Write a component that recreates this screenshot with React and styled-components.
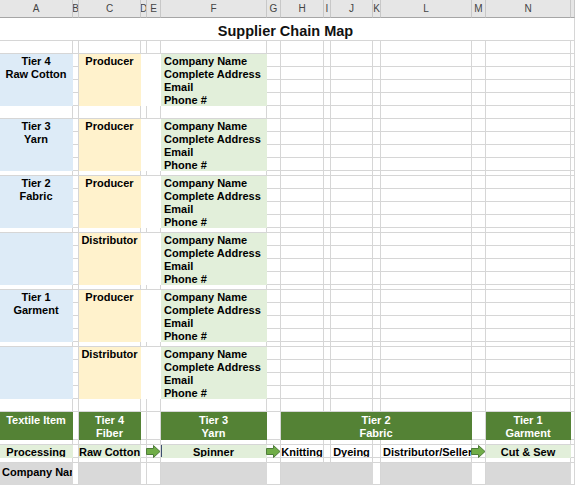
import React from 'react';
import styled, { createGlobalStyle } from 'styled-components';

const GRID = '#d6d6d6';

const fills = {
  blue: '#ddebf7',
  yellow: '#fff2cc',
  mint: '#e2efda',
  green: '#548235',
  gray: '#d9d9d9',
  white: '#ffffff',
};

const letters = ['A', 'B', 'C', 'D', 'E', 'F', 'G', 'H', 'I', 'J', 'K', 'L', 'M', 'N', ''];
const colWidths = '73px 6px 62px 6px 14px 106px 14px 43px 7px 42px 8px 91px 14px 85px 1fr';

const block = [13, 13, 13, 13];
const rowHeights = [
  18, 23, 13,
  ...block, 13,
  ...block, 5,
  ...block, 5,
  ...block, 5,
  ...block, 5,
  ...block, 13,
  28, 5, 13, 5, 22,
];

const GlobalStyle = createGlobalStyle`
  html, body {
    margin: 0;
    padding: 0;
    background: #fff;
    overflow: hidden;
  }
`;

const Sheet = styled.div`
  display: grid;
  grid-template-columns: ${colWidths};
  grid-template-rows: ${rowHeights.map((h) => h + 'px').join(' ')};
  width: 575px;
  height: 485px;
  overflow: hidden;
  background: #fff;
  font-family: "Liberation Sans", Arial, sans-serif;
`;

const HeadCell = styled.div`
  grid-column: ${(p) => p.$c};
  grid-row: 1;
  box-sizing: border-box;
  background: #e6e6e6;
  border-right: 1px solid #c8c8c8;
  border-bottom: 1px solid #a6a6a6;
  color: #444;
  font-size: 10px;
  display: flex;
  align-items: center;
  justify-content: center;
  overflow: hidden;
`;

const TitleCell = styled.div`
  grid-column: 1 / span 14;
  grid-row: 2;
  box-sizing: border-box;
  border-bottom: 1px solid ${GRID};
  display: flex;
  align-items: flex-end;
  justify-content: center;
  padding-bottom: 1px;
  font-size: 14.5px;
  font-weight: bold;
  color: #111;
`;

const Cell = styled.div`
  grid-column: ${(p) => p.$c} / span ${(p) => p.$cs || 1};
  grid-row: ${(p) => p.$r} / span ${(p) => p.$rs || 1};
  box-sizing: border-box;
  position: relative;
  overflow: ${(p) => (p.$arrow ? 'visible' : 'hidden')};
  white-space: nowrap;
  font-size: 11px;
  line-height: 13px;
  font-weight: bold;
  color: ${(p) => (p.$fill === 'green' ? '#fff' : '#000')};
  background: ${(p) => (p.$fill ? fills[p.$fill] : '#fff')};
  border-right: 1px solid ${(p) => (p.$fill ? 'transparent' : GRID)};
  border-bottom: 1px solid ${(p) => (p.$fill ? 'transparent' : GRID)};
  box-shadow: ${(p) => (p.$edge ? 'inset 1px 0 0 #3d4f6e' : 'none')};
  text-align: ${(p) => (p.$align === 'left' ? 'left' : 'center')};
  padding: ${(p) => p.$pt ?? 1}px 0 0 ${(p) => (p.$align === 'left' ? p.$pl ?? 3 : 0)}px;
  z-index: ${(p) => (p.$arrow ? 2 : 'auto')};
`;

const Line = styled.div`
  height: 13px;
`;

const ArrowIcon = styled.svg`
  position: absolute;
  left: -1px;
  top: 0;
  display: block;
`;

function Arrow() {
  return (
    <ArrowIcon width="15" height="13" viewBox="0 0 15 13">
      <polygon
        points="0.5,3.5 7.5,3.5 7.5,0.5 14,6.5 7.5,12.5 7.5,9.5 0.5,9.5"
        fill="#70ad47"
        stroke="#4f7d3a"
        strokeWidth="1"
        strokeLinejoin="miter"
      />
    </ArrowIcon>
  );
}

const supplierBlocks = [
  { r: 4, tier: ['Tier 4', 'Raw Cotton'], role: 'Producer' },
  { r: 9, tier: ['Tier 3', 'Yarn'], role: 'Producer' },
  { r: 14, tier: ['Tier 2', 'Fabric'], role: 'Producer' },
  { r: 19, tier: [], role: 'Distributor' },
  { r: 24, tier: ['Tier 1', 'Garment'], role: 'Producer' },
  { r: 29, tier: [], role: 'Distributor' },
];

const contactLines = ['Company Name', 'Complete Address', 'Email', 'Phone #'];

const blankRows = [3, 8, 13, 18, 23, 28, 33, 35, 37];

function Lines({ items }) {
  return items.map((t) => <Line key={t}>{t}</Line>);
}

export default function App() {
  const cells = [];
  let k = 0;
  const add = (props, children = null) =>
    cells.push(
      <Cell key={k++} {...props}>
        {children}
      </Cell>
    );

  blankRows.forEach((r) => {
    for (let c = 1; c <= 15; c++) add({ $c: c, $r: r });
  });

  supplierBlocks.forEach(({ r, tier, role }) => {
    add({ $c: 1, $r: r, $rs: 4, $fill: 'blue' }, <Lines items={tier} />);
    for (let i = 0; i < 4; i++) add({ $c: 2, $r: r + i });
    add({ $c: 3, $r: r, $rs: 4, $fill: 'yellow' }, role);
    add({ $c: 4, $cs: 2, $r: r, $rs: 4, $fill: 'white' });
    add({ $c: 6, $r: r, $rs: 4, $fill: 'mint', $align: 'left' }, <Lines items={contactLines} />);
    for (let i = 0; i < 4; i++) {
      for (let c = 7; c <= 15; c++) add({ $c: c, $r: r + i });
    }
  });

  // tier header row
  add({ $c: 1, $r: 34, $fill: 'green', $pt: 2 }, 'Textile Item');
  add({ $c: 2, $r: 34 });
  add({ $c: 3, $r: 34, $fill: 'green', $pt: 2 }, <Lines items={['Tier 4', 'Fiber']} />);
  add({ $c: 4, $r: 34 });
  add({ $c: 5, $r: 34 });
  add({ $c: 6, $r: 34, $fill: 'green', $pt: 2 }, <Lines items={['Tier 3', 'Yarn']} />);
  add({ $c: 7, $r: 34 });
  add({ $c: 8, $cs: 5, $r: 34, $fill: 'green', $pt: 2 }, <Lines items={['Tier 2', 'Fabric']} />);
  add({ $c: 13, $r: 34 });
  add({ $c: 14, $r: 34, $fill: 'green', $pt: 2 }, <Lines items={['Tier 1', 'Garment']} />);
  add({ $c: 15, $r: 34 });

  // processing row
  add({ $c: 1, $r: 36, $fill: 'mint' }, 'Processing');
  add({ $c: 2, $r: 36 });
  add({ $c: 3, $r: 36, $fill: 'mint' }, 'Raw Cotton');
  add({ $c: 4, $r: 36 });
  add({ $c: 5, $r: 36, $arrow: true }, <Arrow />);
  add({ $c: 6, $r: 36, $fill: 'mint', $edge: true }, 'Spinner');
  add({ $c: 7, $r: 36, $arrow: true }, <Arrow />);
  add({ $c: 8, $r: 36 }, 'Knitting');
  add({ $c: 9, $r: 36 });
  add({ $c: 10, $r: 36 }, 'Dyeing');
  add({ $c: 11, $r: 36 });
  add({ $c: 12, $r: 36, $align: 'left', $pl: 2 }, 'Distributor/Seller');
  add({ $c: 13, $r: 36, $arrow: true }, <Arrow />);
  add({ $c: 14, $r: 36, $fill: 'mint' }, 'Cut & Sew');
  add({ $c: 15, $r: 36 });

  // company row
  add({ $c: 1, $r: 38, $fill: 'gray', $align: 'left', $pl: 2, $pt: 3 }, 'Company Name');
  add({ $c: 2, $r: 38 });
  add({ $c: 3, $r: 38, $fill: 'gray' });
  add({ $c: 4, $r: 38 });
  add({ $c: 5, $r: 38 });
  add({ $c: 6, $r: 38, $fill: 'gray' });
  add({ $c: 7, $r: 38 });
  add({ $c: 8, $cs: 3, $r: 38, $fill: 'gray' });
  add({ $c: 11, $r: 38 });
  add({ $c: 12, $r: 38, $fill: 'gray' });
  add({ $c: 13, $r: 38 });
  add({ $c: 14, $r: 38, $fill: 'gray' });
  add({ $c: 15, $r: 38 });

  return (
    <>
      <GlobalStyle />
      <Sheet>
        {letters.map((l, i) => (
          <HeadCell key={'h' + i} $c={i + 1}>
            {l}
          </HeadCell>
        ))}
        <TitleCell>Supplier Chain Map</TitleCell>
        <Cell $c={15} $r={2} />
        {cells}
      </Sheet>
    </>
  );
}
